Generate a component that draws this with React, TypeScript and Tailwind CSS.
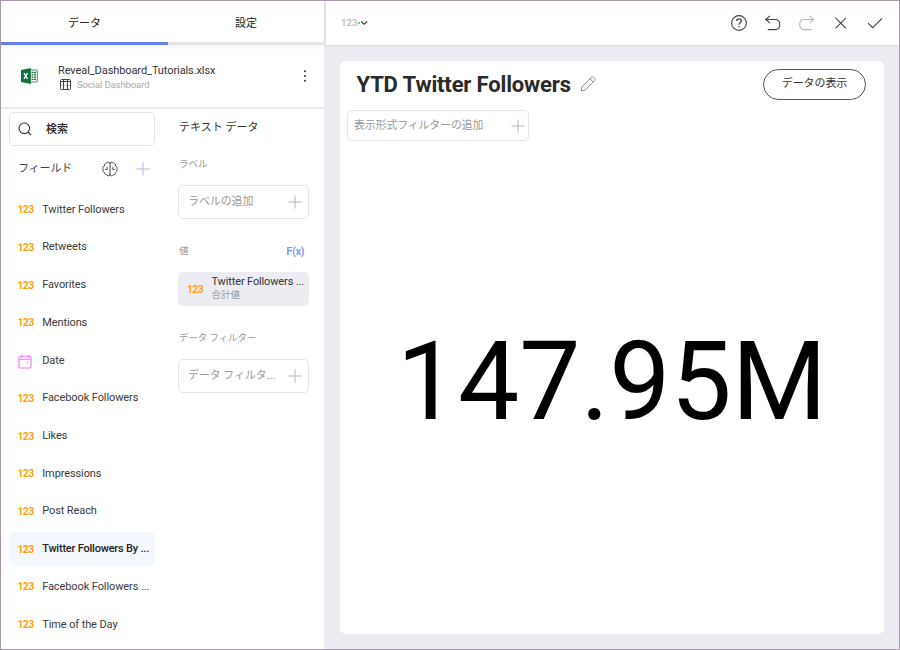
import React from "react";

const JP = "font-['Roboto','Noto_Sans_CJK_JP',sans-serif]";

const fields = [
  "Twitter Followers",
  "Retweets",
  "Favorites",
  "Mentions",
  "Date",
  "Facebook Followers",
  "Likes",
  "Impressions",
  "Post Reach",
  "Twitter Followers By ...",
  "Facebook Followers ...",
  "Time of the Day",
];

function Plus({ className }: { className: string }) {
  return (
    <svg width="14" height="14" viewBox="0 0 14 14" className={className} fill="none" stroke="currentColor">
      <path d="M7 .5v13M.5 7h13" />
    </svg>
  );
}

function Num() {
  return <span className="w-[16px] pt-[1px] text-[10.4px] leading-4 font-bold tracking-[-0.6px] text-[#ff9f0f]">123</span>;
}

function CalendarIcon() {
  return (
    <svg width="14" height="15" viewBox="0 0 14 15" className="mt-[1px]" fill="none" stroke="#f478f4" strokeWidth="1.1">
      <rect x="1" y="2.2" width="12" height="11.8" rx="1.2" />
      <path d="M1 5.3h12M3.5.7v3M10.5.7v3" />
      <path d="M9 8.5h1.2" strokeWidth="1.6" />
    </svg>
  );
}

function ExcelIcon() {
  return (
    <svg width="17" height="16" viewBox="0 0 17 16">
      <rect x="9" y="2" width="7.3" height="12" rx=".6" fill="#fff" stroke="#207245" strokeWidth=".8" />
      <path d="M10.5 4.5h4.5M10.5 6.8h4.5M10.5 9.1h4.5M10.5 11.4h4.5" stroke="#207245" strokeWidth="1.3" strokeDasharray="2 .5" />
      <path d="M0 1.9 9.8 0v16L0 14.1z" fill="#15703f" />
      <path d="m3 5.2 3.6 5.7M6.5 5.2 3 10.9" stroke="#fff" strokeWidth="1.3" />
    </svg>
  );
}

function BrainIcon() {
  return (
    <svg width="16" height="16" viewBox="0 0 16 16" fill="none" stroke="#444" strokeWidth="1" strokeLinecap="round" strokeLinejoin="round">
      <path d="M8 2v12M8 2.2C7.2.8 5.3.7 4.500 2.200 3 2.100 2 3.500 2.600 4.800 1 5.400.4 7 1.100 8.200.5 9.600 1.100 11 2.500 11.400c0 1.500 1 2.500 2.400 2.400.8 1.500 2.500 1.400 3.100.1" />
      <path d="M8 2.200C8.800.8 10.700.7 11.500 2.200c1.500-.1 2.500 1.300 1.900 2.600 1.600.6 2.200 2.200 1.500 3.400.6 1.400 0 2.800-1.400 3.200 0 1.500-1 2.500-2.400 2.400-.8 1.500-2.500 1.400-3.100.1" />
      <path d="M3.500 8.500h1.700V6.500M12.500 8.500h-1.700V6.500" strokeWidth=".9" />
    </svg>
  );
}

function AddBox({ label }: { label: string }) {
  return (
    <div className="flex h-[34px] w-[131px] items-center justify-between rounded-[5px] border border-[#e4e4e4] pr-[6px] pl-[9px] text-[#999]">
      <span className="text-[10.9px] leading-4 whitespace-nowrap">{label}</span>
      <Plus className="text-[#b3b3b3]" />
    </div>
  );
}

function LeftPanel() {
  return (
    <aside className="flex w-[323px] shrink-0 flex-col bg-white">
      <div className="flex h-[44px] shrink-0 text-[11px] text-[#222] shadow-[0_2px_5px_rgba(0,0,0,0.06)]">
        <div className="flex w-[167px] items-center justify-center border-b-[3px] border-[#6680f0] pt-[5px]">データ</div>
        <div className="flex flex-1 items-center justify-center border-b-[3px] border-[#e6e6e6] pt-[5px]">設定</div>
      </div>
      <div className="flex h-[64px] shrink-0 items-center border-b-2 border-[#ecedf4] pl-5">
        <ExcelIcon />
        <div className="ml-5 flex-1 pt-[3px]">
          <div className="text-[11px] leading-[14px] tracking-[-0.09px] text-[#333]">Reveal_Dashboard_Tutorials.xlsx</div>
          <div className="flex items-center gap-[6px] pl-[2px]">
            <svg width="11" height="11" viewBox="0 0 11 11" fill="none" stroke="#444">
              <rect x=".5" y=".5" width="10" height="10" rx="1" />
              <path d="M.5 2.5h10" />
              <path d="M.5 6.5h10" strokeOpacity=".3" />
              <path d="M3.5 1v9.5M7.5 1v9.5" />
            </svg>
            <span className="text-[9.6px] leading-[14px] tracking-[-0.15px] text-[#aaa]">Social Dashboard</span>
          </div>
        </div>
        <svg width="4" height="14" viewBox="0 0 4 14" className="mr-[17px]" fill="#333">
          <circle cx="2" cy="2.2" r="1" />
          <circle cx="2" cy="7" r="1" />
          <circle cx="2" cy="11.8" r="1" />
        </svg>
      </div>
      <div className="flex flex-1">
        <div className="w-[154px] pt-[3px] pl-2">
          <div className="flex h-[34px] items-center rounded-[5px] border border-[#e4e4e4] pl-[8px]">
            <svg width="14" height="14" viewBox="0 0 14 14" fill="none" stroke="#333" strokeWidth="1.1">
              <circle cx="6.3" cy="6.3" r="5.3" />
              <path d="m10 10 3.2 3.2" />
            </svg>
            <span className="ml-[14px] pt-[2px] text-[11px] font-medium text-[#222]">検索</span>
          </div>
          <div className="flex h-[46px] items-center pl-[9px]">
            <span className="w-[83.5px] pt-[1px] text-[10.9px] whitespace-nowrap text-[#444]">フィールド</span>
            <BrainIcon />
            <Plus className="ml-[18.5px] text-[#aab6fb]" />
          </div>
          <ul className="mt-[0.7px] flex flex-col gap-[3.73px]">
            {fields.map((name, i) => (
              <li
                key={name}
                className={
                  "flex h-[34px] items-center rounded-[5px] pl-[8.5px] " +
                  (i === 9 ? "bg-[#f4f7fe] font-medium tracking-[-0.21px] text-[#222]" : "tracking-[-0.1px] text-[#3a3a3a]")
                }
              >
                <span className="flex w-[24.7px] shrink-0 items-center">{name === "Date" ? <CalendarIcon /> : <Num />}</span>
                <span className="text-[11px] leading-4 whitespace-nowrap">{name}</span>
              </li>
            ))}
          </ul>
        </div>
        <div className="ml-[23px] w-[131px]">
          <div className="mt-[11px] pl-[1px] text-[11px] leading-4 text-[#333]">テキスト データ</div>
          <div className="mt-[20px] mb-[13px] pl-[1px] text-[9.5px] leading-4 text-[#999]">ラベル</div>
          <AddBox label="ラベルの追加" />
          <div className="mt-[24px] mb-[13px] flex justify-between pr-[5px] pl-[1px] leading-4">
            <span className="text-[9.5px] text-[#999]">値</span>
            <span className="text-[11.5px] font-medium tracking-[-0.6px] text-[#7d92f5]">F(x)</span>
          </div>
          <div className="flex h-[34px] items-center rounded-[5px] bg-[#ecedf3] pl-[9px]">
            <Num />
            <div className="ml-[8.5px] pb-[1px] whitespace-nowrap">
              <div className="text-[11px] leading-[13px] tracking-[-0.14px] text-[#333]">Twitter Followers ...</div>
              <div className="pb-[2px] text-[9.5px] leading-[13px] text-[#999]">合計値</div>
            </div>
          </div>
          <div className="mt-[24px] mb-[13px] pl-[1px] text-[9.4px] leading-4 text-[#999]">データ フィルター</div>
          <AddBox label="データ フィルタ..." />
        </div>
      </div>
    </aside>
  );
}

function Toolbar() {
  return (
    <header className="flex h-[44px] shrink-0 items-center border-l border-[#e2e2e6] bg-white pl-[15px] shadow-[0_1px_3px_rgba(0,0,0,0.08)]">
      <span className="text-[9.5px] font-medium text-[#bbb]">123</span>
      <svg width="11" height="6" viewBox="0 0 11 6" fill="none">
        <circle cx="1.8" cy="3" r="1.3" fill="#5fd35f" />
        <path d="m4.200 1.500 3 2.800 3-2.800" stroke="#444" strokeWidth="1.2" />
      </svg>
      <svg width="158" height="20" viewBox="0 0 158 20" className="mr-[13px] ml-auto" fill="none" stroke="#444" strokeWidth="1.1">
        <circle cx="11" cy="10" r="7.4" />
        <path d="M8.700 8.100c0-1.500 1-2.200 2.300-2.200s2.300.8 2.300 2.100c0 1.700-2.300 1.700-2.300 3.700M11 13v1.300" strokeWidth="1.300" />
        <path d="M42 2.800 37.700 6.500l4.300 3.700M37.700 6.500h9.500c3 0 4.600 1.700 4.600 5 0 3.500-1.700 5.100-4.600 5.100h-7.400" />
        <path d="m81.500 2.800 4.300 3.700-4.300 3.700M85.800 6.500h-9.500c-3 0-4.600 1.700-4.600 5 0 3.500 1.700 5.100 4.600 5.100h7.400" stroke="#b5b5b5" />
        <path d="m107.500 4.800 10.500 10.500M118 4.800 107.500 15.300" />
        <path d="m140 10.200 4.700 4.500 9.400-9.400" />
      </svg>
    </header>
  );
}

export default function App() {
  return (
    <div className={`flex h-[650px] w-[900px] overflow-hidden border border-[#a898aa] bg-[#ecedf3] ${JP}`}>
      <LeftPanel />
      <div className="flex min-w-0 flex-1 flex-col pl-[1px]">
        <Toolbar />
        <main className="mt-4 mr-[15px] mb-[15px] ml-[14.5px] flex flex-1 flex-col rounded-[6px] bg-white">
          <div className="flex h-[49px] items-center pr-[18px] pl-[17px]">
            <h1 className="pb-[1px] text-[22px] leading-7 font-bold tracking-[-0.16px] whitespace-nowrap text-[#2a2a2a]">YTD Twitter Followers</h1>
            <svg width="16" height="16" viewBox="0 0 16 16" className="mb-[3px] ml-[9px]" fill="none" stroke="#888">
              <path d="M1 15l1.100-4.300L11.500 1.300q1-.8 2 0l1.200 1.200q.9 1 0 2L5.300 13.900zM10 2.800l3.200 3.200" />
            </svg>
            <button className="mb-[3px] ml-auto h-[31px] w-[103px] rounded-full border border-[#555] pt-[1px] text-[10.9px] text-[#333]">データの表示</button>
          </div>
          <div className="ml-[7.5px] flex h-[31px] w-[182px] items-center justify-between rounded-[5px] border border-[#e4e4e4] pr-[3px] pl-[6px]">
            <span className="pt-[1px] text-[10.8px] whitespace-nowrap text-[#999]">表示形式フィルターの追加</span>
            <Plus className="text-[#b3b3b3]" />
          </div>
          <div className="flex flex-1 items-center justify-center pb-[10px]">
            <span className="text-[109px] leading-none whitespace-nowrap text-black">147.95M</span>
          </div>
        </main>
      </div>
    </div>
  );
}
